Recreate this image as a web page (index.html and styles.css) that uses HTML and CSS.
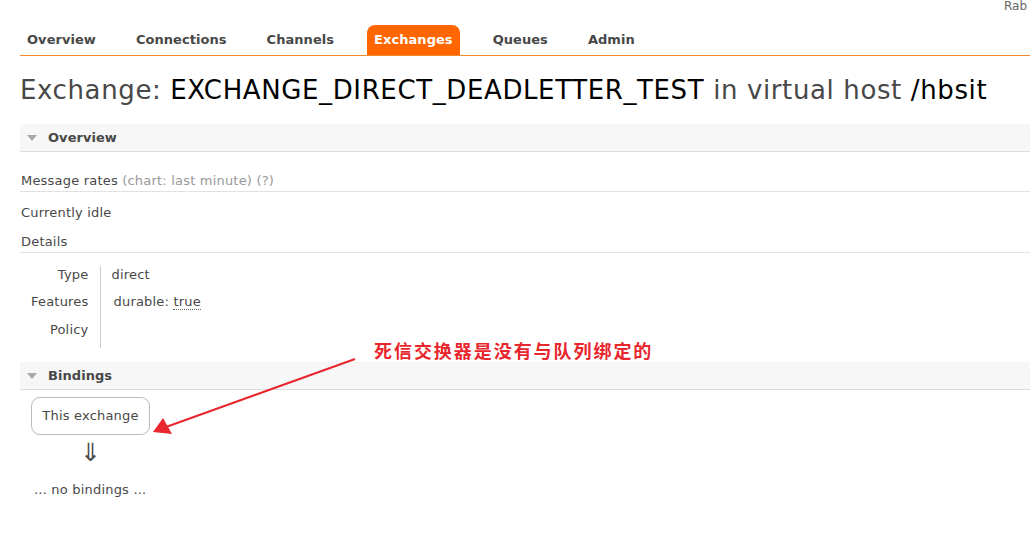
FILE: index.html
```html
<!DOCTYPE html>
<html>
<head>
<meta charset="utf-8">
<link rel="stylesheet" href="styles.css">
</head>
<body>
<div class="page">
  <div class="topbar"><span class="product">Rab</span></div>
  <nav class="tabs">
    <a class="tab">Overview</a>
    <a class="tab">Connections</a>
    <a class="tab">Channels</a>
    <a class="tab active">Exchanges</a>
    <a class="tab">Queues</a>
    <a class="tab">Admin</a>
  </nav>
  <main class="main">
    <h1 class="title">Exchange: <b>EXCHANGE_DIRECT_DEADLETTER_TEST</b> in virtual host <b>/hbsit</b></h1>

    <section class="section">
      <h2 class="section-head"><span class="tri"></span>Overview</h2>
      <div class="section-body">
        <h3 class="sub sub-rates">Message rates <span class="muted">(chart: last minute) (?)</span></h3>
        <div class="idle">Currently idle</div>
        <h3 class="sub sub-details">Details</h3>
        <table class="facts">
          <tr class="r1"><th>Type</th><td>direct</td></tr>
          <tr class="r2"><th>Features</th><td><span class="feat">durable: <abbr>true</abbr></span></td></tr>
          <tr class="r3"><th>Policy</th><td></td></tr>
        </table>
      </div>
    </section>

    <section class="section">
      <h2 class="section-head"><span class="tri"></span>Bindings</h2>
      <div class="bindings">
        <div class="this-ex">This exchange</div>
        <div class="darrow">&#8659;</div>
        <div class="nobind">... no bindings ...</div>
      </div>
    </section>
  </main>

  <div class="note">死信交换器是没有与队列绑定的</div>
  <svg class="arrow" width="1030" height="543" viewBox="0 0 1030 543">
    <line x1="355" y1="359" x2="166" y2="427" stroke="#e8262d" stroke-width="2"/>
    <polygon points="153,432 163,418 172,434" fill="#e8262d"/>
  </svg>
</div>
</body>
</html>
```

FILE: styles.css
```css
html, body {
  margin: 0;
  padding: 0;
  background: #fff;
}
body {
  font-family: "DejaVu Sans", Verdana, sans-serif;
  font-size: 13px;
  letter-spacing: 0.2px;
  color: #484848;
  overflow: hidden;
  width: 1030px;
  height: 543px;
}
.page {
  position: relative;
  width: 1030px;
  height: 543px;
}
.topbar {
  height: 25px;
  padding-left: 1004px;
  white-space: nowrap;
  overflow: hidden;
  font-size: 12px;
  line-height: 13px;
  color: #666;
  letter-spacing: 0;
}
.tabs {
  display: flex;
  margin-left: 20px;
  border-bottom: 1px solid #f08a2c;
  height: 30px;
}
.tab {
  display: block;
  padding: 0 7px;
  margin-right: 26px;
  font-weight: bold;
  font-size: 13px;
  letter-spacing: 0.05px;
  line-height: 30px;
  color: #484848;
  border-radius: 8px 8px 0 0;
}
.tab.active {
  background: #f60;
  color: #fff;
}
.main {
  padding-left: 20px;
}
.title {
  margin: 18px 0 18px 0;
  font-size: 26px;
  font-weight: normal;
  line-height: 32px;
  color: #484848;
  white-space: nowrap;
  letter-spacing: 0.62px;
}
.title b {
  font-weight: normal;
  color: #000;
}
.section-head {
  margin: 0;
  height: 27px;
  display: flex;
  align-items: center;
  background: #f7f7f7;
  border-bottom: 1px solid #ddd;
  font-size: 13px;
  font-weight: bold;
  letter-spacing: 0.05px;
  color: #484848;
}
.tri {
  width: 0;
  height: 0;
  margin: 1px 11px 0 7px;
  border-left: 5px solid transparent;
  border-right: 5px solid transparent;
  border-top: 6px solid #aaa;
}
.section-body {
  padding-top: 20px;
}
.sub {
  margin: 0;
  font-size: 13px;
  font-weight: normal;
  line-height: 17px;
  padding: 0 0 2px 1px;
  border-bottom: 1px solid #e2e2e2;
}
.muted {
  color: #999;
}
.idle {
  line-height: 17px;
  padding: 12px 0 12px 1px;
}
.facts {
  border-collapse: collapse;
  margin: 13px 0 14px 0;
}
.facts th {
  font-weight: normal;
  text-align: right;
  padding: 0 11px;
  border-right: 1px solid #ccc;
  width: 57px;
  line-height: 17px;
  vertical-align: top;
}
.facts td {
  padding: 0 11px;
  line-height: 17px;
  vertical-align: top;
}
.facts .r1 th, .facts .r1 td { height: 26px; }
.facts .r2 th, .facts .r2 td { height: 28px; padding-top: 1px; }
.facts .r3 th, .facts .r3 td { height: 27px; }
.feat {
  padding-left: 2px;
}
abbr {
  text-decoration: none;
  border-bottom: 1px dotted #666;
}
.bindings {
  padding: 7px 0 0 11px;
}
.this-ex {
  display: inline-block;
  width: 117px;
  height: 36px;
  line-height: 36px;
  text-align: center;
  border: 1px solid #bbb;
  border-radius: 9px;
}
.darrow {
  width: 119px;
  padding-top: 3px;
  text-align: center;
  font-size: 25px;
  line-height: 30px;
  color: #484848;
  letter-spacing: 0;
}
.nobind {
  padding: 13px 0 0 3px;
  line-height: 17px;
}
.note {
  position: absolute;
  left: 374px;
  top: 338px;
  font-family: "Noto Sans CJK SC", sans-serif;
  font-weight: bold;
  font-size: 18px;
  letter-spacing: 1.95px;
  line-height: 24px;
  color: #e8262d;
  white-space: nowrap;
}
.arrow {
  position: absolute;
  left: 0;
  top: 0;
  pointer-events: none;
}
```
